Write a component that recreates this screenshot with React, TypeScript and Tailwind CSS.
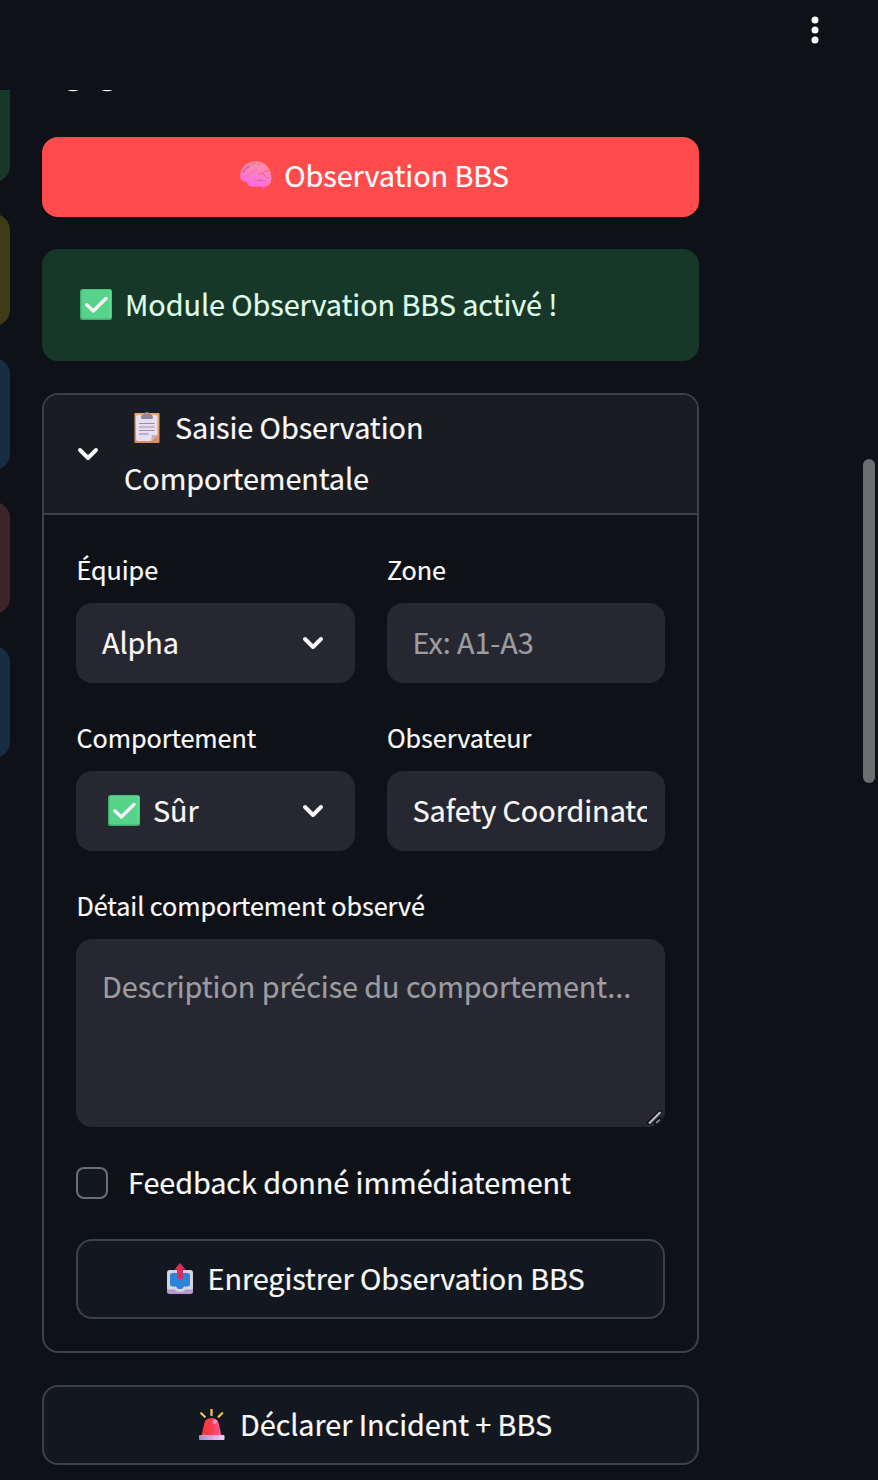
import type { ReactNode } from "react";

function Brain() {
  return (
    <svg width="32" height="29" viewBox="0 0 32 29" className="mb-px shrink-0">
      <defs>
        <linearGradient id="brain" x1="0.7" y1="0" x2="0.35" y2="1">
          <stop offset="0" stopColor="#ff8f9f" />
          <stop offset="0.5" stopColor="#fb80c3" />
          <stop offset="1" stopColor="#fc6ae6" />
        </linearGradient>
      </defs>
      <path d="M20 23L25 24L24 28.5Q21 28 20 24Z" fill="#f24fc8" />
      <path d="M0.500 17C-1 10 4 2 12 .7C20-.8 27 2.5 30 10C33 18 31 25 25 25.5H12C9 25.5 7.5 24 6.500 20.500C4 21 1.500 20 .5 17Z" fill="url(#brain)" />
      <g fill="none" stroke="#e0609f" strokeWidth="0.900" strokeLinecap="round">
        <path d="M2.500 11C5 10 5 7.500 9 5.500" strokeWidth="2" stroke="#e0688f" />
        <path d="M5 15.500C7.500 16 9 11.500 13 11S15 8.500 17 8.500" stroke="#ea68b0" />
        <path d="M29 10C26 8.500 24 12 21 12.500C19.500 14 18.500 13 18 13M22 12.500C26 13 24 17 29 17" />
        <path d="M15 19C17 20.500 20 18 25 19.500M20 18.500V21" />
        <path d="M12 3L15 2.500M18 3L20 4" />
      </g>
    </svg>
  );
}

function GreenCheck() {
  return (
    <svg width="32" height="31" viewBox="0 0 32 31" className="mb-[2px] shrink-0">
      <rect width="32" height="31" rx="2.500" fill="#41ad73" />
      <rect x="1.500" y="0.500" width="30" height="29" rx="2" fill="#57d38c" />
      <path d="M30.300 1.500V28" stroke="#60df90" strokeWidth="1.600" />
      <path d="M6.800 15.800L13.300 22L26 9.500" fill="none" stroke="#f7f0fb" strokeWidth="3.400" strokeLinecap="round" strokeLinejoin="round" />
    </svg>
  );
}

function Clipboard() {
  return (
    <svg width="26" height="31" viewBox="0 0 26 31" className="mt-[2px] shrink-0">
      <defs>
        <linearGradient id="board" x1="0" y1="0" x2="0" y2="1">
          <stop offset="0" stopColor="#eea86e" />
          <stop offset="1" stopColor="#d98f57" />
        </linearGradient>
      </defs>
      <rect x="0.500" y="1" width="25" height="30" rx="1" fill="url(#board)" />
      <path d="M4 3H21.500Q23.500 3 23.500 5V23L17 29H4Q2 29 2 27V5Q2 3 4 3Z" fill="#e7deef" />
      <path d="M23.500 23L17 29L18 23Z" fill="#bcaec8" />
      <path d="M7 6Q7 2.500 10 2L11 .3H14.500L15.500 2Q19 2.500 19 6Q19 7 17.500 7H8.500Q7 7 7 6Z" fill="#90869a" />
      <circle cx="13" cy="2.300" r="1" fill="#d49770" />
      <path d="M5 11.500H20.500M5 15H20.500M5 18.500H20.500" stroke="#9a8ca8" strokeWidth="1.100" />
      <path d="M5 22H14.500" stroke="#bbaec8" strokeWidth="1.800" />
    </svg>
  );
}

function Outbox() {
  return (
    <svg width="26" height="31" viewBox="0 0 26 31" className="mb-[2px] shrink-0">
      <defs>
        <linearGradient id="arrow">
          <stop offset="0" stopColor="#f02e38" />
          <stop offset="1" stopColor="#c52b7d" />
        </linearGradient>
      </defs>
      <rect y="13" width="26" height="18" rx="2.500" fill="#b39bd0" />
      <path d="M2.500 7H23.500Q26 7 26 10V25Q26 26.500 24 26.500H18Q17 29 13 29Q9 29 8 26.500H2Q0 26.500 0 25V10Q0 7 2.500 7Z" fill="#d8d3e0" />
      <path d="M5.500 10H20.500Q23 10 23 12.500V21.500Q23 23.500 20.500 23.500H17L15 26H11L9 23.500H5.500Q3 23.500 3 21.500V12.500Q3 10 5.500 10Z" fill="#2b84d6" />
      <path d="M13 0L18.500 6.500H16V16H10V6.500H7.500Z" fill="url(#arrow)" />
    </svg>
  );
}

function Siren() {
  return (
    <svg width="26" height="31" viewBox="0 0 26 31" className="mb-[2px] shrink-0">
      <defs>
        <linearGradient id="dome">
          <stop offset="0" stopColor="#ff3838" />
          <stop offset="0.5" stopColor="#fd3950" />
          <stop offset="1" stopColor="#ff5a98" />
        </linearGradient>
        <linearGradient id="base">
          <stop offset="0" stopColor="#a78bc6" />
          <stop offset="1" stopColor="#e5d3f8" />
        </linearGradient>
      </defs>
      <path d="M2.200 4.200L5.800 7.800M12.500 .8V6.200M23.200 4.200L19.600 7.800" stroke="#f7c14b" strokeWidth="2.300" strokeLinecap="round" />
      <path d="M2.500 27L5.500 13.500Q7 9 12.500 9T19.500 13.500L22.500 27Z" fill="url(#dome)" />
      <circle cx="15.700" cy="12.600" r="2.200" fill="#ff9bbd" />
      <rect y="26" width="25.500" height="5" rx="1" fill="url(#base)" />
    </svg>
  );
}

function Chevron() {
  return (
    <svg width="22" height="14" viewBox="0 0 22 14" fill="none" className="shrink-0">
      <path d="M3 3L11 11L19 3" stroke="#fafafa" strokeWidth="3.900" strokeLinecap="round" strokeLinejoin="round" />
    </svg>
  );
}

/* The bottom padding centres the glyphs optically, since the font sits low in its line box. */
function Label({ children }: { children: ReactNode }) {
  return <span className="block whitespace-nowrap pb-1">{children}</span>;
}

function Field({ label, children }: { label: string; children: ReactNode }) {
  return (
    <div className="flex min-w-0 flex-1 flex-col">
      <div className="mb-2 flex h-12 items-center pl-[0.500px] text-[25.200px]">
        <Label>{label}</Label>
      </div>
      {children}
    </div>
  );
}

const box = "flex h-20 items-center rounded-2xl bg-[#262730]";
const outlined = "flex h-20 items-center justify-center rounded-2xl border-2 border-[#3e4147] bg-[#131720]";

export default function App() {
  return (
    <div className="relative flex h-[1480px] w-[878px] flex-col overflow-hidden bg-[#0e1117] font-['Noto_Sans_CJK_SC','Noto_Sans',sans-serif] text-[28.800px] leading-[51px] tracking-[-0.070px] text-[#fafafa] [-webkit-text-stroke:0.200px]">
      <header className="flex h-[90px] shrink-0 justify-end pr-[59px] pt-4">
        <svg width="8" height="28" viewBox="0 0 8 28" fill="#fafafa">
          <circle cx="4" cy="4" r="3.500" />
          <circle cx="4" cy="14" r="3.500" />
          <circle cx="4" cy="24" r="3.500" />
        </svg>
      </header>

      <div className="flex min-h-0 flex-1 items-start">
        <aside className="flex w-[10px] shrink-0 flex-col items-end gap-8 overflow-hidden">
          <div className="h-[92px] w-16 rounded-br-2xl bg-[#173828]" />
          <div className="h-28 w-16 rounded-r-2xl bg-[#3e3b16]" />
          <div className="h-28 w-16 rounded-r-2xl bg-[#172d43]" />
          <div className="h-28 w-16 rounded-r-2xl bg-[#3e2328]" />
          <div className="h-28 w-16 rounded-r-2xl bg-[#172d43]" />
        </aside>

        <main className="ml-8 flex w-[657px] flex-col">
          <div className="h-[47px] pl-[25px]">
            <svg width="50" height="2" viewBox="0 0 50 2" fill="#fafafa">
              <path d="M.5 0H11.500Q9 1.200 6 1.200T.5 0ZM34.500 0H45.500Q43 1.200 40 1.200T34.500 0Z" />
            </svg>
          </div>

          <div className="flex flex-col gap-8">
            <button className="flex h-20 items-center justify-center gap-3 rounded-2xl bg-[#ff4b4b] pb-[2px] pl-2 text-white">
              <Brain />
              <Label>Observation BBS</Label>
            </button>

            <div className="flex h-28 items-center gap-[13px] rounded-2xl bg-[#173828] pl-[38px] text-[#dffde9]">
              <GreenCheck />
              <Label>Module Observation BBS activé !</Label>
            </div>

            <section className="h-[960px] overflow-hidden rounded-2xl border-2 border-[#3e4044]">
              <div className="flex h-[120px] items-center border-b-2 border-[#3e4044] bg-[#1a1c24] pl-[33px]">
                <Chevron />
                <div className="ml-[25px] flex flex-col pb-1">
                  <div className="flex items-center gap-[15px] pl-[10px]">
                    <Clipboard />
                    <span>Saisie Observation</span>
                  </div>
                  <span>Comportementale</span>
                </div>
              </div>

              <div className="flex flex-col px-8 pt-8">
                <div className="flex flex-col gap-8">
                  <div className="flex gap-8">
                    <Field label="Équipe">
                      <div className={`${box} justify-between pl-[26px] pr-[31px]`}>
                        <Label>Alpha</Label>
                        <Chevron />
                      </div>
                    </Field>
                    <Field label="Zone">
                      <div className={`${box} pl-[26px] text-[#9d9da1]`}>
                        <Label>Ex: A1-A3</Label>
                      </div>
                    </Field>
                  </div>
                  <div className="flex gap-8">
                    <Field label="Comportement">
                      <div className={`${box} justify-between pl-8 pr-[31px]`}>
                        <div className="flex items-center gap-[13px]">
                          <GreenCheck />
                          <Label>Sûr</Label>
                        </div>
                        <Chevron />
                      </div>
                    </Field>
                    <Field label="Observateur">
                      <div className={`${box} pl-[26px] pr-[18px]`}>
                        <input
                          className="mb-1 h-[51px] w-full min-w-0 bg-transparent p-0 tracking-[-0.050px] outline-none"
                          defaultValue="Safety Coordinator"
                        />
                      </div>
                    </Field>
                  </div>
                  <Field label="Détail comportement observé">
                    <div className="flex h-[188px] items-end justify-between rounded-2xl bg-[#262730] pl-[26px] pr-[3px]">
                      <span className="self-start whitespace-nowrap pt-[21px] text-[#9d9da1]">
                        Description précise du comportement...
                      </span>
                      <svg width="15" height="15" viewBox="0 0 15 15" className="-ml-4 mb-[2px] shrink-0" fill="none">
                        <path d="M.5 14L14 .5M7.500 14L14 8" stroke="#0d0d12" strokeWidth="3.500" />
                        <path d="M2 13.500L13.500 2" stroke="#bdbdc1" strokeWidth="2.200" />
                        <path d="M9 13L13 9.500" stroke="#a5a5aa" strokeWidth="1.300" />
                      </svg>
                    </div>
                  </Field>
                </div>

                <div className="mt-8 flex h-12 items-center gap-5">
                  <div className="size-8 rounded-[8px] border-2 border-[#6c6e73] bg-[#131720]" />
                  <Label>Feedback donné immédiatement</Label>
                </div>

                <button className={`${outlined} mt-8 gap-[15px] pl-[10px]`}>
                  <Outbox />
                  <Label>Enregistrer Observation BBS</Label>
                </button>
              </div>
            </section>

            <button className={`${outlined} gap-[15px] pl-[10px]`}>
              <Siren />
              <Label>Déclarer Incident + BBS</Label>
            </button>
          </div>
        </main>
      </div>

      <div className="absolute left-[863px] top-[459px] h-[324px] w-3 rounded-full bg-[#6d6e72]" />
    </div>
  );
}
